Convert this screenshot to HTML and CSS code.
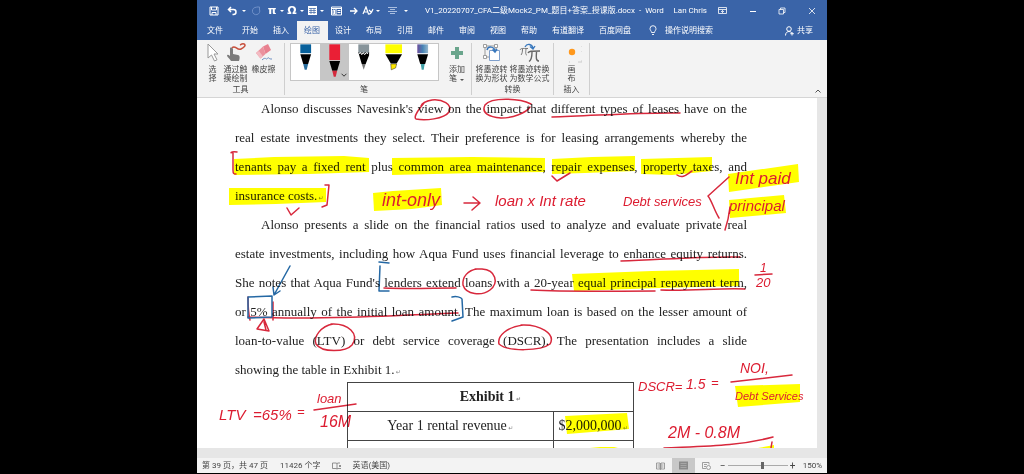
FILE: index.html
```html
<!DOCTYPE html>
<html lang="zh-CN">

<head>
  <meta charset="UTF-8">
  <meta name="viewport" content="width=device-width, initial-scale=1.0">
  <title>V1_20220707_CFA二级Mock2_PM_题目+答案_授课版.docx - Word</title>
  <link rel="stylesheet" href="styles.css">
</head>

<body>
  <div class="window">
    <header class="titlebar">
      <div class="quick">
        <button class="wide" aria-label="保存"><svg width="10" height="10" viewBox="0 0 10 10"><path d="M1 1h8v8H1zM2.500 1v3h5V1M3 9V6.500h4V9" fill="none" stroke="#fff"/></svg></button>
        <button class="wide" aria-label="撤消"><svg width="11" height="10" viewBox="0 0 11 10"><path d="M4 1L1.500 3.500 4 6M2 3.500h4.500a2.500 2.500 0 0 1 0 5H5.500" fill="none" stroke="#fff" stroke-width="1.500"/></svg></button>
        <span class="caret"></span>
        <button class="wide" aria-label="恢复"><svg width="10" height="10" viewBox="0 0 10 10"><path d="M8.500 3.500A3.700 3.700 0 1 1 5.500 1.300M5.500 1h3v3" fill="none" stroke="#6f90c8"/></svg></button>
        <button class="symbol">π</button>
        <span class="caret"></span>
        <button class="symbol">Ω</button>
        <span class="caret"></span>
        <button aria-label="表格"><svg width="9" height="9" viewBox="0 0 9 9"><path d="M0 0h9v9H0z" fill="#fff"/><path d="M1 2.500h7M1 4.500h7M1 6.500h7M3 2v6M6 2v6" stroke="#3a64a8" stroke-width=".7"/></svg></button>
        <span class="caret"></span>
        <button class="pane" aria-label="导航窗格"><svg width="11" height="10" viewBox="0 0 11 10"><path d="M.5 1h10v8H.5zM.5 2.500h10M5 2.500V9M6.500 4.500h3M6.500 6.500h3M2 4h1.500v4H2z" fill="none" stroke="#fff"/></svg></button>
        <button aria-label="下一处"><svg width="8" height="8" viewBox="0 0 8 8"><path d="M0 4h7M4 1l3 3-3 3" fill="none" stroke="#fff" stroke-width="1.300"/></svg></button>
        <button aria-label="样式"><svg width="12" height="10" viewBox="0 0 12 10"><path d="M1 8L4 1l2.500 7M2 6h4M6 8c3 1 4-3 5-5M7 4l2 2" fill="none" stroke="#fff" stroke-width="1.200"/></svg></button>
        <span class="caret"></span>
        <button class="pane" aria-label="居中"><svg width="9" height="8" viewBox="0 0 9 8"><path d="M0 .5h9M2 2.500h5M0 4.500h9M2 6.500h5" stroke="#a9bee0"/></svg></button>
        <span class="caret"></span>
      </div>
      <h1 class="filename">V1_20220707_CFA二级Mock2_PM_题目+答案_授课版.docx&nbsp; -&nbsp; Word</h1>
      <span class="user">Lan Chris</span>
      <div class="controls">
        <button aria-label="功能区显示选项"><svg width="9" height="8" viewBox="0 0 9 8"><path d="M.5.5h8v6h-8zM.5 2.500h8M4.500 6V3.500M3 5l1.500-1.500L6 5" fill="none" stroke="#fff" stroke-width=".8"/></svg></button>
        <button aria-label="最小化"><svg width="8" height="8" viewBox="0 0 8 8"><path d="M1 4.500h6" stroke="#fff"/></svg></button>
        <button aria-label="还原"><svg width="8" height="8" viewBox="0 0 8 8"><path d="M1 2.500h4.500V7H1zM2.500 2.500V1H7v4.500H5.500" fill="none" stroke="#fff" stroke-width=".8"/></svg></button>
        <button aria-label="关闭"><svg width="8" height="8" viewBox="0 0 8 8"><path d="M1 1l6 6M7 1L1 7" stroke="#fff" stroke-width=".8"/></svg></button>
      </div>
    </header>

    <nav class="tabs">
      <button class="file">文件</button>
      <button>开始</button>
      <button>插入</button>
      <button class="active">绘图</button>
      <button>设计</button>
      <button>布局</button>
      <button>引用</button>
      <button>邮件</button>
      <button>审阅</button>
      <button>视图</button>
      <button>帮助</button>
      <button>有道翻译</button>
      <button>百度网盘</button>
      <button class="tell">
        <svg width="8" height="11" viewBox="0 0 8 11"><path d="M2.500 7.500C2.500 6 1 5.500 1 3.700a3 3 0 0 1 6 0C7 5.500 5.500 6 5.500 7.500zM3 9.500h2" fill="none" stroke="#fff" stroke-width=".9"/></svg>
        操作说明搜索
      </button>
      <button class="share">
        <svg width="9" height="10" viewBox="0 0 9 10"><circle cx="4" cy="3" r="2.300" fill="none" stroke="#fff"/><path d="M.5 9.500c0-3 2-4 3.500-4 1 0 2 .5 2.500 1M7 6v3.500M5.300 7.700h3.500" fill="none" stroke="#fff"/></svg>
        共享
      </button>
    </nav>

    <div class="ribbon">
      <section class="group tools">
        <div class="items">
          <button>
            <svg width="14" height="20" viewBox="0 0 14 20"><path d="M2 1v14l3.500-3 3 6 2.500-1.200-3-5.800H12z" fill="#fff" stroke="#999"/></svg>
            选<br>择
          </button>
          <button>
            <svg width="24" height="20" viewBox="0 0 24 20"><path d="M7 4.500c1.500 0 2 1 2 2V11l5 1c2 .5 2 3 1 6H7c-1-2-4-4-4-5.500 0-1 1.500-1 3 .5V6c0-1 0-1.500 1-1.500z" fill="#7c7c7c"/><path d="M8 5c3-4 5 3 9 1s5-4 3-5c-2-.6-3 .5-4 1" fill="none" stroke="#c8503c" stroke-width="1.500"/></svg>
            通过触<br>摸绘制
          </button>
          <button>
            <svg width="20" height="20" viewBox="0 0 20 20"><path d="M9 3.500l5-2.500 3 6-5.500 4z" fill="#e8808f"/><path d="M9 3.500l2.500 7.500-5 4.500L2 10z" fill="#eb919e"/><path d="M2 10l3-2 4 5.500-2.500 2z" fill="#f3bcc3"/><path d="M8 17c3-3 4-1 4.500-1s2-2 2.500-1 1.500 1 3 1" fill="none" stroke="#6c8fc4"/></svg>
            橡皮擦
          </button>
        </div>
        <h2>工具</h2>
      </section>

      <section class="group pens">
        <div class="gallery">
          <button aria-label="蓝色笔"><svg viewBox="0 0 30 36"><path d="M9.500 0h11v9h-11z" fill="#07609b"/><path d="M9.500 10h11l-3 10h-5z"/><path d="M12.500 20h5l-1.500 6h-2z" fill="#296c9c"/></svg></button>
          <button class="picked" aria-label="红色笔"><svg viewBox="0 0 30 36"><path d="M9.500 0h11v16h-11z" fill="#ea1f35"/><path d="M9.500 17h11l-3 10h-5z"/><path d="M12.500 27h5l-1.500 6h-2z" fill="#d42a3d"/><path d="M22 30l2.500 2.500L27 30" fill="none" stroke="#333"/></svg></button>
          <button aria-label="铅笔"><svg viewBox="0 0 30 36"><path d="M9.500 0h11v9h-11z" fill="#87949a"/><path d="M9.500 8l2 1 2-1 1.500 1 2-1 1.500 1 2-1v3l-3.500 9h-4z"/><path d="M10 9.500l2-1 1 2 1.500-2 1.500 2 1.500-2 2 1" fill="none" stroke="#fff"/><path d="M13 20h4l-2 6z" fill="#777"/></svg></button>
          <button aria-label="荧光笔"><svg viewBox="0 0 30 36"><path d="M6.500 0h17v9h-17z" fill="#ff0"/><path d="M6.500 10h17l-5.500 9.500h-6z"/><path d="M12 20h6l-1 4-4.500 2z" fill="#ffe800" stroke="#222" stroke-width=".5"/></svg></button>
          <button aria-label="星系笔"><svg viewBox="0 0 30 36"><defs><linearGradient id="galaxy"><stop offset="0" stop-color="#6a4d9b"/><stop offset=".5" stop-color="#4683b4"/><stop offset="1" stop-color="#96b8cf"/></linearGradient></defs><path d="M9.500 0h11v9h-11z" fill="url(#galaxy)"/><path d="M9.500 10h11l-3 10h-5z"/><path d="M13 20h4l-1 6h-2z" fill="#41a0a6"/></svg></button>
        </div>
        <h2>笔</h2>
      </section>

      <section class="group add">
        <div class="items">
          <button>
            <svg width="14" height="20" viewBox="0 0 14 20"><path d="M7 4v12M1 10h12" stroke="#6aa58c" stroke-width="4"/></svg>
            添加<br>笔 <span class="caret dark"></span>
          </button>
        </div>
      </section>

      <section class="group convert">
        <div class="items">
          <button>
            <svg width="18" height="20" viewBox="0 0 18 20"><path d="M2 3h11v11H2z" fill="none" stroke="#999"/><path d="M.5 1.500h3v3h-3zM11.500 1.500h3v3h-3zM.5 12.500h3v3h-3z" fill="#fff" stroke="#888" stroke-width=".8"/><path d="M6.500 7.500h10v10h-10z" fill="#fff" stroke="#7f9fcb"/><path d="M4 7c1-4 7-4 8 1M9.500 6.500L12 9l2-3" fill="none" stroke="#3978bd" stroke-width="1.500"/></svg>
            将墨迹转<br>换为形状
          </button>
          <button>
            <svg width="22" height="20" viewBox="0 0 22 20"><path d="M1 7c1-2 2-1.500 8-1.500M3.500 6c0 3-.5 5-1.500 6M7 6c-.5 4-.5 6 1 6" fill="none" stroke="#777"/><path d="M9 10c1-2 3-2 12-2M13 9c0 4-.5 8-3 9.500M17.500 9c-.5 6-.5 9 2.500 9" fill="none" stroke="#666" stroke-width="1.400"/><path d="M6 4c2-4 7-3 8 1M11 3.500L14 6l2-3" fill="none" stroke="#3978bd" stroke-width="1.300"/></svg>
            将墨迹转换<br>为数学公式
          </button>
        </div>
        <h2>转换</h2>
      </section>

      <section class="group insert">
        <div class="items">
          <button>
            <svg width="20" height="20" viewBox="0 0 20 20"><circle cx="10" cy="9" r="3.200" fill="#ff981c"/><path d="M20 3v1M20 8v1M7 19h1M16 19h4v-2" fill="none" stroke="#ccc"/></svg>
            画<br>布
          </button>
        </div>
        <h2>插入</h2>
      </section>
      <button class="collapse" aria-label="折叠功能区"><svg width="6" height="4" viewBox="0 0 6 4"><path d="M.5 3.500L3 1l2.500 2.500" fill="none" stroke="#555"/></svg></button>
    </div>

    <main class="workspace">
      <article class="page" lang="en">
        <p>
          <span class="line indent">Alonso discusses Navesink's view on the impact that different types of leases have on the</span>
          <span class="line">real estate investments they select. Their preference is for leasing arrangements whereby the</span>
          <span class="line">tenants pay a fixed rent plus common area maintenance, repair expenses, property taxes, and</span>
          <span class="line last">insurance costs. <i class="mark">↵</i></span>
        </p>
        <p>
          <span class="line indent">Alonso presents a slide on the financial ratios used to analyze and evaluate private real</span>
          <span class="line">estate investments, including how Aqua Fund uses financial leverage to enhance equity returns.</span>
          <span class="line">She notes that Aqua Fund's lenders extend loans with a 20-year equal principal repayment term,</span>
          <span class="line">or 5% annually of the initial loan amount. The maximum loan is based on the lesser amount of</span>
          <span class="line">loan-to-value (LTV) or debt service coverage (DSCR). The presentation includes a slide</span>
          <span class="line last">showing the table in Exhibit 1. <i class="mark">↵</i></span>
        </p>
        <table>
          <tr>
            <th colspan="2">Exhibit 1 <i class="mark">↵</i></th>
          </tr>
          <tr>
            <td>Year 1 rental revenue <i class="mark">↵</i></td>
            <td class="amount">$2,000,000 <i class="mark">↵</i></td>
          </tr>
          <tr>
            <td></td>
            <td class="amount"></td>
          </tr>
        </table>

        <!-- ink annotations over the page -->
        <svg class="ink" viewBox="197 98 620 350" preserveAspectRatio="none">
          <g class="highlight">
            <path d="M234 159l40-2 70-1 25 2v14l-60 2-75 1z"/>
            <path d="M392 158l80-1 73 1v14l-70 1-83 2z"/>
            <path d="M552 159l40-2 43-1v15l-50 2-33 1z"/>
            <path d="M641 159l71-2v14l-40 4-31-1z"/>
            <path d="M229 188l97 0v14l-50 2-47 1z"/>
            <path d="M373 193l20-2 48-3 1 17-30 4-38 2z"/>
            <path d="M728 174l70-10 1 18-70 10z"/>
            <path d="M729 200l55-5 2 18-56 5z"/>
            <path d="M572 274l80-3 87-2v17l-80 2-85 3z"/>
            <path d="M735 386l65-2v18l-62 5z"/>
            <path d="M565 416l62-3 2 16-62 5z"/>
            <path d="M590 448l10-1 14 0 4 1zM758 448l16-3v3z"/>
          </g>
          <g class="strokes">
            <path d="M424 103c-5 6-11 14-8 16 9 2 28 0 33-7 4-8-7-13-17-12-6 1-10 3-11 6"/>
            <path d="M531 104c-12-6-40-7-46 1-4 8 4 12 16 13 12 0 25-5 29-11"/>
            <path d="M552 117c40-1 90-5 128-4"/>
            <path d="M237 152c-7-1-7 2-4 0v18c0 4 1 4 3 4"/>
            <path d="M325 185h4l-2 20-5 2"/>
            <path d="M287 208l4 7 8-7"/>
            <path d="M552 176l5 5 13-8M677 175c6 4 10-1 15-4"/>
            <path d="M464 203h15M473 197l7 6-8 7"/>
            <path d="M729 177l-21 19c4 5 6 14 11 22"/>
            <path d="M730 207c-1 9-3 17-5 23"/>
            <path d="M621 261c38-1 80-5 119-4"/>
            <path d="M384 288c24 1 50 0 72 0"/>
            <path d="M477 269c-9 1-15 8-14 16 3 10 19 11 27 5 9-7 6-20-8-21h-7"/>
            <path d="M531 290c38 2 79 1 124 1M661 290c30 1 58-2 84-1"/>
            <path d="M248 297c0 8 0 15 2 23M273 302v18M248 317c60 3 145-1 210-4"/>
            <path d="M264 319l-7 10 12 2zM264 322l2 8"/>
            <path d="M333 324c-12 2-20 13-17 20 6 9 30 8 36 1 8-11-4-22-21-21"/>
            <path d="M523 325c-16 2-26 11-24 19 9 8 42 7 51 0 6-10-10-20-29-19"/>
            <path d="M755 275l17-1"/>
            <path d="M314 410l42-6M731 382l61-7M664 448c45-2 75-2 109-11M772 442l-1 6"/>
          </g>
          <g class="strokes blue">
            <path d="M379 262l10 1M380 266l-1 25h10M452 297c4-1 9 0 10 2l1 18-11 4"/>
            <path d="M290 266l-16 29M273 287l1 8 6-4"/>
            <path d="M248 297l24-1v21l-24 1z"/>
          </g>
          <g class="writing">
            <text x="382" y="206" font-size="18">int-only</text>
            <text x="495" y="206" font-size="15">loan x Int rate</text>
            <text x="623" y="206" font-size="13">Debt services</text>
            <text x="735" y="184" font-size="17">Int paid</text>
            <text x="729" y="211" font-size="15">principal</text>
            <text x="760" y="272" font-size="12">1</text>
            <text x="756" y="287" font-size="13">20</text>
            <text x="219" y="420" font-size="15">LTV</text>
            <text x="253" y="420" font-size="15">=65%</text>
            <text x="297" y="416" font-size="13">=</text>
            <text x="317" y="403" font-size="13">loan</text>
            <text x="320" y="427" font-size="16">16M</text>
            <text x="638" y="391" font-size="13">DSCR=</text>
            <text x="686" y="389" font-size="14">1.5</text>
            <text x="711" y="387" font-size="13">=</text>
            <text x="740" y="373" font-size="14">NOI,</text>
            <text x="735" y="400" font-size="11">Debt Services</text>
            <text x="668" y="438" font-size="16">2M - 0.8M</text>
          </g>
        </svg>
      </article>
    </main>

    <footer class="status">
      <span class="pages">第 39 页，共 47 页</span>
      <span class="words">11426 个字</span>
      <svg width="10" height="8" viewBox="0 0 10 8"><path d="M.5 1h3.500l1 .5V7l-1-.5H.5zM5 1.500L6 1h2M5 7l1-.5h3M7 3l2 2M9 3L7 5" fill="none" stroke="#777" stroke-width=".8"/></svg>
      <span class="language">英语(美国)</span>
      <div class="views">
        <button aria-label="阅读视图"><svg width="9" height="8" viewBox="0 0 9 8"><path d="M.5 1H4v6H.5zM5 1h3.500v6H5zM4.500 1v7M1.500 3h2M1.500 5h2M5.500 3h2M5.500 5h2" fill="none" stroke="#888" stroke-width=".8"/></svg></button>
        <button class="picked" aria-label="页面视图"><svg width="9" height="9" viewBox="0 0 9 9"><path d="M0 .5h9v8H0z" fill="#8a8a8a"/><path d="M1.500 2.500h6M1.500 4.500h6M1.500 6.500h6" stroke="#b8b8b8" stroke-width=".6"/></svg></button>
        <button aria-label="Web 版式视图"><svg width="9" height="8" viewBox="0 0 9 8"><path d="M7 2.500V.5H.5v6H4M2 2.500h3M2 4.500h2" fill="none" stroke="#888" stroke-width=".8"/><circle cx="6.500" cy="5.500" r="2" fill="none" stroke="#888" stroke-width=".8"/></svg></button>
      </div>
      <button class="step" aria-label="缩小">−</button>
      <input class="zoom" type="range" min="10" max="250" value="150" aria-label="缩放">
      <button class="step" aria-label="放大">+</button>
      <span class="percent">150%</span>
    </footer>
  </div>
</body>

</html>
```

FILE: styles.css
```css
* {
  box-sizing: border-box;
}

body {
  margin: 0;
  height: 100vh;
  display: grid;
  grid-template-columns: 197fr 630fr 197fr;
  background-color: #000;
  font-family: Roboto, "Noto Sans CJK SC", sans-serif;
  font-size: 8px;
  line-height: 10px;
  color: #444;
  overflow: hidden;
}

button {
  padding: 0;
  border: none;
  background: none;
  color: inherit;
  font: inherit;
  cursor: pointer;
}

h1,
h2 {
  margin: 0;
  font-size: 8px;
  font-weight: normal;
}

svg {
  flex: none;
}

.window {
  grid-column: 2;
  height: 100vh;
  display: flex;
  flex-direction: column;
  padding-bottom: 1px;
  min-width: 0;
}

/* title bar */
.titlebar {
  display: flex;
  align-items: center;
  flex: none;
  height: 21px;
  padding-left: 8px;
  background-color: #3a64a8;
  color: #fff;
  white-space: nowrap;
}

.quick,
.controls {
  display: flex;
  align-items: center;
}

.quick button {
  display: flex;
  justify-content: center;
  width: 14px;
}

.quick .wide {
  width: 18px;
}

.quick .pane {
  width: 22px;
}

.quick .symbol {
  font-family: "DejaVu Sans", sans-serif;
  font-size: 11px;
  font-weight: bold;
}

.caret {
  display: inline-block;
  margin: 0 1px;
  border: 2px solid transparent;
  border-top-color: #fff;
  border-bottom: none;
}

.caret.dark {
  border-top-color: #555;
}

.filename {
  margin-left: 16px;
}

.user {
  margin-left: auto;
}

.controls {
  width: 120px;
  justify-content: space-around;
}

.controls button {
  display: flex;
}

/* tabs */
.tabs {
  display: flex;
  flex: none;
  height: 19px;
  padding-right: 14px;
  background-color: #3a64a8;
  color: #fff;
}

.tabs button {
  padding: 0 8px 0 7px;
  white-space: nowrap;
}

.tabs .file {
  padding: 0 12px 0 10px;
}

.tabs .active {
  background-color: #f3f3f3;
  color: #3a64a8;
}

.tabs .tell,
.tabs .share {
  display: flex;
  align-items: center;
}

.tabs .tell {
  gap: 8px;
  padding-left: 10px;
}

.tabs .share {
  gap: 3px;
  margin-left: auto;
  padding: 0;
}

/* ribbon */
.ribbon {
  display: flex;
  flex: none;
  height: 58px;
  padding: 3px 0 2px;
  background-color: #f3f3f3;
  border-bottom: 1px solid #d5d5d5;
  line-height: 9px;
}

.group {
  display: flex;
  flex-direction: column;
  align-items: center;
  justify-content: space-between;
  border-right: 1px solid #cfcfcf;
}

.group h2 {
  line-height: 10px;
}

.items {
  display: flex;
  align-items: flex-start;
  justify-content: center;
  gap: 2px;
}

.items button {
  display: block;
  text-align: center;
  white-space: nowrap;
}

.items svg {
  display: block;
  margin: 0 auto 2px;
}

.tools {
  width: 88px;
}

.tools .items {
  gap: 4px;
}

.pens {
  width: 158px;
  border-right: none;
}

.gallery {
  display: flex;
  width: 149px;
  height: 38px;
  border: 1px solid #c6c6c6;
  background-color: #fff;
}

.gallery button {
  flex: 1;
}

.gallery svg {
  display: block;
  width: 100%;
  height: 36px;
}

.gallery .picked {
  background-color: #c6c6c6;
}

.add {
  width: 29px;
}

.convert {
  width: 82px;
}

.insert {
  width: 36px;
}

.collapse {
  margin: auto 6px 0 auto;
}

/* document */
.workspace {
  flex: 1;
  display: flex;
  min-height: 0;
  padding: 0 10px 10px 0;
  background-color: #e6e6e6;
}

.page {
  position: relative;
  flex: 1;
  min-width: 0;
  padding: 0 70px 0 38px;
  background-color: #fff;
  color: #222;
  font-family: "Liberation Serif", serif;
  font-size: 13px;
  line-height: 29px;
  overflow: hidden;
}

.page p {
  margin: 0;
}

.page p:first-child {
  margin-top: -4px;
}

.line {
  display: block;
  text-align-last: justify;
  white-space: nowrap;
}

.line.indent {
  padding-left: 26px;
}

.line.last {
  text-align-last: left;
}

.mark {
  margin-left: -2px;
  color: #888;
  font-family: "DejaVu Sans", sans-serif;
  font-size: 6px;
  font-style: normal;
  line-height: 0;
}

table {
  width: 56%;
  margin: -2px 0 0 112px;
  border-collapse: collapse;
  font-size: 14px;
  text-align: center;
}

tr {
  height: 29px;
}

th,
td {
  padding: 0;
  border: 1px solid #444;
  line-height: 28px;
}

.amount {
  width: 28%;
}

.ink {
  position: absolute;
  top: 0;
  left: 0;
  width: 100%;
  height: 350px;
  mix-blend-mode: multiply;
}

.highlight {
  fill: #ff0;
}

.strokes {
  fill: none;
  stroke: #d8283c;
  stroke-width: 1.5;
  stroke-linecap: round;
  stroke-linejoin: round;
}

.strokes.blue {
  stroke: #2468a4;
}

.writing {
  fill: #dc1c30;
  font-family: "Liberation Sans", sans-serif;
  font-style: italic;
}

/* status bar */
.status {
  display: flex;
  align-items: center;
  flex: none;
  height: 15px;
  padding: 0 5px;
  background-color: #f3f3f3;
  white-space: nowrap;
}

.words {
  margin: 0 12px;
}

.language {
  margin-left: 10px;
}

.views {
  display: flex;
  align-self: stretch;
  margin-left: auto;
}

.views button {
  display: flex;
  align-items: center;
  justify-content: center;
  width: 23px;
}

.views .picked {
  background-color: #c8c8c8;
}

.step {
  width: 10px;
  font-size: 10px;
}

.zoom {
  appearance: none;
  width: 60px;
  height: 8px;
  margin: 0;
  background: linear-gradient(#aaa, #aaa) center / 100% 1px no-repeat;
}

.zoom::-webkit-slider-thumb {
  appearance: none;
  width: 3px;
  height: 7px;
  background-color: #666;
}

.percent {
  margin-left: 5px;
}
```
